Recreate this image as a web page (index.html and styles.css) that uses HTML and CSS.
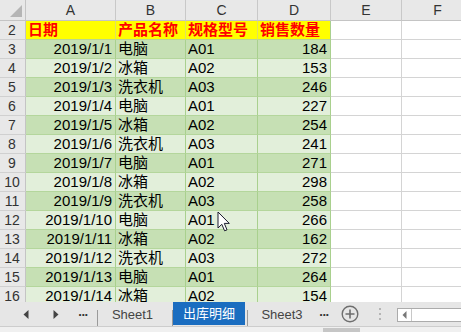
FILE: index.html
```html
<!DOCTYPE html>
<html>
<head>
<meta charset="utf-8">
<link rel="stylesheet" href="styles.css">
</head>
<body>
<div class="app">
  <div class="sheet">
    <div class="grid">
      <div class="corner"><span class="tri"></span></div>
      <div class="ch">A</div><div class="ch">B</div><div class="ch">C</div><div class="ch">D</div><div class="ch">E</div><div class="ch">F</div>

      <div class="rh">2</div><div class="c y">日期</div><div class="c y">产品名称</div><div class="c y">规格型号</div><div class="c y ylast">销售数量</div><div class="c e"></div><div class="c e"></div>

      <div class="rh">3</div><div class="c g1 r">2019/1/1</div><div class="c g1">电脑</div><div class="c g1">A01</div><div class="c g1 r">184</div><div class="c e"></div><div class="c e"></div>
      <div class="rh">4</div><div class="c g2 r">2019/1/2</div><div class="c g2">冰箱</div><div class="c g2">A02</div><div class="c g2 r">153</div><div class="c e"></div><div class="c e"></div>
      <div class="rh">5</div><div class="c g1 r">2019/1/3</div><div class="c g1">洗衣机</div><div class="c g1">A03</div><div class="c g1 r">246</div><div class="c e"></div><div class="c e"></div>
      <div class="rh">6</div><div class="c g2 r">2019/1/4</div><div class="c g2">电脑</div><div class="c g2">A01</div><div class="c g2 r">227</div><div class="c e"></div><div class="c e"></div>
      <div class="rh">7</div><div class="c g1 r">2019/1/5</div><div class="c g1">冰箱</div><div class="c g1">A02</div><div class="c g1 r">254</div><div class="c e"></div><div class="c e"></div>
      <div class="rh">8</div><div class="c g2 r">2019/1/6</div><div class="c g2">洗衣机</div><div class="c g2">A03</div><div class="c g2 r">241</div><div class="c e"></div><div class="c e"></div>
      <div class="rh">9</div><div class="c g1 r">2019/1/7</div><div class="c g1">电脑</div><div class="c g1">A01</div><div class="c g1 r">271</div><div class="c e"></div><div class="c e"></div>
      <div class="rh">10</div><div class="c g2 r">2019/1/8</div><div class="c g2">冰箱</div><div class="c g2">A02</div><div class="c g2 r">298</div><div class="c e"></div><div class="c e"></div>
      <div class="rh">11</div><div class="c g1 r">2019/1/9</div><div class="c g1">洗衣机</div><div class="c g1">A03</div><div class="c g1 r">258</div><div class="c e"></div><div class="c e"></div>
      <div class="rh">12</div><div class="c g2 r">2019/1/10</div><div class="c g2">电脑</div><div class="c g2">A01</div><div class="c g2 r">266</div><div class="c e"></div><div class="c e"></div>
      <div class="rh">13</div><div class="c g1 r">2019/1/11</div><div class="c g1">冰箱</div><div class="c g1">A02</div><div class="c g1 r">162</div><div class="c e"></div><div class="c e"></div>
      <div class="rh">14</div><div class="c g2 r">2019/1/12</div><div class="c g2">洗衣机</div><div class="c g2">A03</div><div class="c g2 r">272</div><div class="c e"></div><div class="c e"></div>
      <div class="rh">15</div><div class="c g1 r">2019/1/13</div><div class="c g1">电脑</div><div class="c g1">A01</div><div class="c g1 r">264</div><div class="c e"></div><div class="c e"></div>
      <div class="rh">16</div><div class="c g2 r">2019/1/14</div><div class="c g2">冰箱</div><div class="c g2">A02</div><div class="c g2 r">154</div><div class="c e"></div><div class="c e"></div>
    </div>
  </div>

  <div class="tabbar">
    <div class="nav"><svg width="6" height="9" viewBox="0 0 6 9"><path d="M5.5 0 L0.5 4.5 L5.5 9 Z" fill="#444"/></svg></div>
    <div class="nav nav2"><svg width="6" height="9" viewBox="0 0 6 9"><path d="M0.5 0 L5.5 4.5 L0.5 9 Z" fill="#444"/></svg></div>
    <div class="more">...</div>
    <div class="sep"></div>
    <div class="tab t1">Sheet1</div>
    <div class="sep"></div>
    <div class="tab active">出库明细</div>
    <div class="sep sep3"></div>
    <div class="tab t3">Sheet3</div>
    <div class="more more2">...</div>
    <div class="plus"><svg width="18" height="18" viewBox="0 0 18 18"><circle cx="9" cy="9" r="7.8" fill="none" stroke="#6e6e6e" stroke-width="1.4"/><path d="M9 4.5 V13.5 M4.5 9 H13.5" stroke="#6e6e6e" stroke-width="1.6"/></svg></div>
    <div class="vdots"><span></span><span></span><span></span></div>
    <div class="hbox">
      <div class="hbtn"><svg width="5" height="8" viewBox="0 0 5 8"><path d="M4.5 0 L0.5 4 L4.5 8 Z" fill="#777"/></svg></div>
    </div>
  </div>
  <div class="bottom"><span class="thumb"></span></div>

  <svg class="cursor" width="14" height="22" viewBox="0 0 14 22"><path d="M1 1 L1 17 L4.8 13.3 L7.6 19.8 L10 18.8 L7.3 12.4 L12.3 12.4 Z" fill="#fff" stroke="#1a1a2e" stroke-width="1" stroke-linejoin="round"/></svg>
</div>
</body>
</html>
```

FILE: styles.css
```css
* { box-sizing: border-box; }
html, body { margin: 0; padding: 0; background: #fff; }
.app {
  position: relative;
  width: 461px;
  height: 332px;
  overflow: hidden;
  font-family: "Liberation Sans", "Noto Sans CJK SC", sans-serif;
}
.sheet {
  height: 302px;
  overflow: hidden;
}
.grid {
  display: grid;
  grid-template-columns: 26px 90px 70px 72px 73px 71px 72px;
  grid-template-rows: 21px repeat(15, 19px);
  width: 474px;
}
.corner {
  background: #e8e8e8;
  border-right: 1px solid #c4c4c4;
  border-bottom: 1px solid #c4c4c4;
  display: flex;
  justify-content: flex-end;
  align-items: flex-end;
  padding: 0 3px 3px 0;
}
.tri {
  width: 12px;
  height: 12px;
  background: #b5b5b5;
  clip-path: polygon(100% 0, 100% 100%, 0 100%);
}
.ch {
  background: #e8e8e8;
  border-right: 1px solid #c8c8c8;
  border-bottom: 1px solid #c4c4c4;
  color: #333;
  font-size: 14px;
  line-height: 20px;
  text-align: center;
}
.rh {
  background: #e8e8e8;
  border-right: 1px solid #c4c4c4;
  border-bottom: 1px solid #d0d0d0;
  color: #333;
  font-size: 14px;
  line-height: 18px;
  text-align: center;
  padding-right: 1px;
}
.c {
  font-size: 15px;
  line-height: 18px;
  color: #000;
  padding: 0 3px 0 2px;
  white-space: nowrap;
  overflow: hidden;
  border-right: 1px solid #a9d08e;
  border-bottom: 1px solid #b4d69c;
}
.r { text-align: right; }
.y {
  background: #ffff00;
  color: #ff0000;
  font-weight: bold;
  border-right: 1px solid #e0e060;
  border-bottom: 1px solid #b9d78f;
}
.ylast { border-right-color: #a9d08e; }
.g1 { background: #c6e0b4; }
.g2 { background: #e2efda; }
.e {
  background: #fff;
  border-right: 1px solid #d4d4d4;
  border-bottom: 1px solid #d4d4d4;
}

.tabbar {
  height: 25px;
  background: #e6e6e6;
  border-bottom: 1px solid #cdcdcd;
  display: flex;
  align-items: stretch;
  font-size: 13px;
  color: #444;
}
.nav {
  width: 16px;
  margin-left: 18px;
  display: flex;
  align-items: center;
  justify-content: center;
}
.nav2 { margin-left: 14px; }
.more {
  width: 18px;
  margin-left: 10px;
  text-align: center;
  font-weight: bold;
  color: #333;
  line-height: 20px;
  letter-spacing: -0.5px;
}
.more2 { width: 16px; margin-left: 0; }
.sep {
  width: 1px;
  margin-left: 5px;
  margin-top: 8px;
  background: #9a9a9a;
}
.sep3 { margin-left: 2px; }
.tab {
  display: flex;
  align-items: center;
  justify-content: center;
  line-height: 1;
}
.t1 { width: 69px; }
.active {
  width: 72px;
  background: #1a6dc0;
  color: #fff;
  margin-bottom: 1px;
}
.t3 { width: 68px; }
.plus {
  width: 20px;
  margin-left: 8px;
  display: flex;
  align-items: center;
  justify-content: center;
}
.vdots {
  width: 10px;
  margin-left: 15px;
  display: flex;
  flex-direction: column;
  align-items: center;
  justify-content: center;
  gap: 3px;
}
.vdots span {
  width: 2px;
  height: 2px;
  background: #b5b5b5;
}
.hbox {
  margin-left: 12px;
  margin-top: 6px;
  margin-bottom: 4px;
  flex: 1;
  background: #fff;
  border: 1px solid #ababab;
  border-right: none;
  display: flex;
}
.hbtn {
  width: 14px;
  border-right: 1px solid #c8c8c8;
  display: flex;
  align-items: center;
  justify-content: center;
}
.bottom {
  height: 5px;
  background: #f0f0f0;
  display: flex;
}
.thumb {
  width: 37px;
  margin-left: 323px;
  margin-top: 1px;
  background: #c6c6c6;
}
.cursor {
  position: absolute;
  left: 217px;
  top: 211px;
}
```
